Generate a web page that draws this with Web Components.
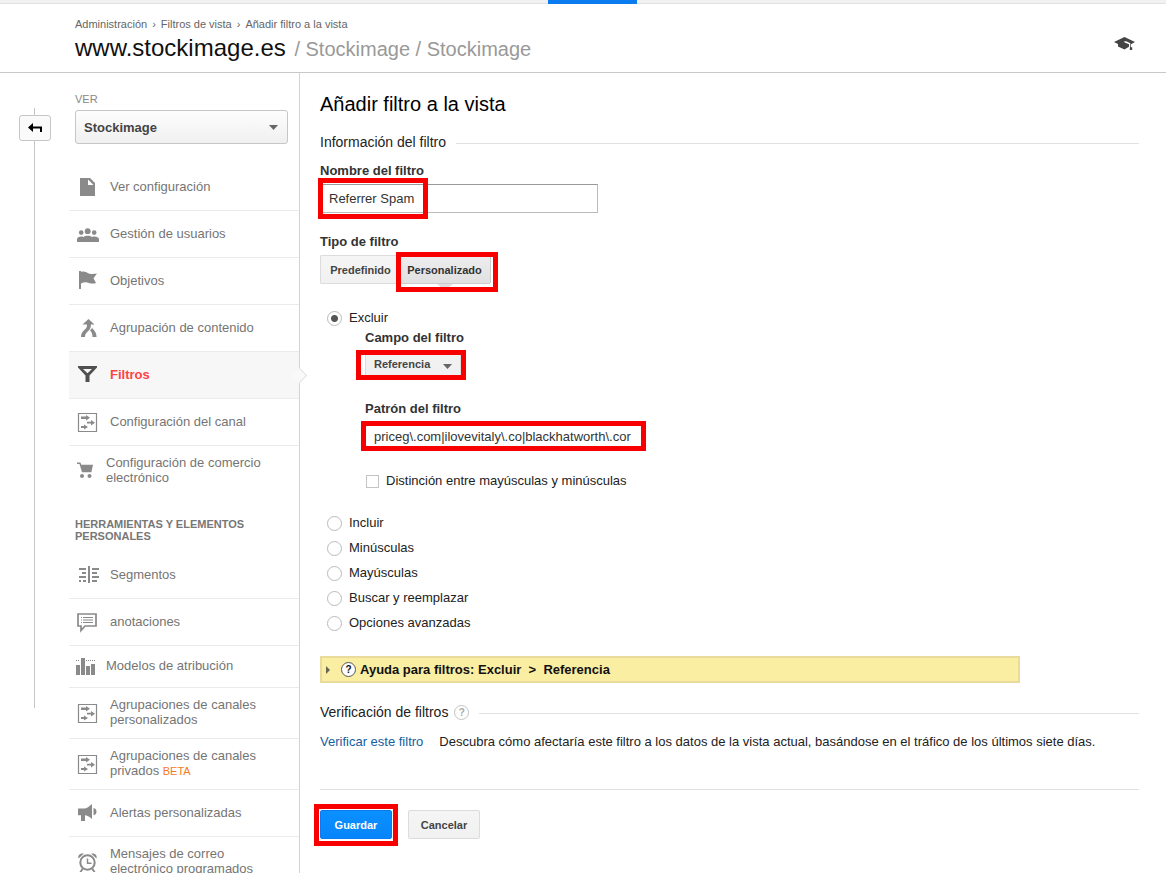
<!DOCTYPE html>
<html lang="es">
<head>
<meta charset="utf-8">
<title>Añadir filtro a la vista</title>
<style>
	body { margin: 0; height: 100vh; overflow: hidden; background: #fff; color: #222; font: 13px/16px "Liberation Sans", Arial, sans-serif; }
</style>
</head>
<body>
<admin-page>
	<admin-header slot="header"></admin-header>
	<back-rail slot="rail"></back-rail>
	<admin-sidebar slot="sidebar">
		<nav-item icon="doc">Ver configuración</nav-item>
		<nav-item icon="users">Gestión de usuarios</nav-item>
		<nav-item icon="flag">Objetivos</nav-item>
		<nav-item icon="merge">Agrupación de contenido</nav-item>
		<nav-item icon="funnel" active>Filtros</nav-item>
		<nav-item icon="channel">Configuración del canal</nav-item>
		<nav-item icon="cart" narrow last>Configuración de comercio electrónico</nav-item>
		<nav-heading>Herramientas y elementos personales</nav-heading>
		<nav-item icon="segments">Segmentos</nav-item>
		<nav-item icon="note">anotaciones</nav-item>
		<nav-item icon="bars" narrow short>Modelos de atribución</nav-item>
		<nav-item icon="channel">Agrupaciones de canales personalizados</nav-item>
		<nav-item icon="channel" badge="BETA">Agrupaciones de canales privados</nav-item>
		<nav-item icon="horn">Alertas personalizadas</nav-item>
		<nav-item icon="clock">Mensajes de correo electrónico programados</nav-item>
	</admin-sidebar>
	<filter-form></filter-form>
</admin-page>

<script>
const ICONS = {
	doc: `<path d="M5 2h10l5 5v13H5z"/><path d="M13 3.500v5.500h5.500z" fill="#fff"/>`,
	users: `<circle cx="12.700" cy="8.200" r="2.900"/><circle cx="6.200" cy="9.600" r="2.300"/><circle cx="19.200" cy="9.600" r="2.300"/><path d="M2 19v-2.500C2 14.500 4 13.600 6 13.600c.9 0 1.700.1 2.400.5 1.100-.9 2.600-1.300 4.300-1.300s3.200.4 4.300 1.300c.7-.4 1.500-.5 2.400-.5 2.300 0 4.600.9 4.600 2.900V19z"/>`,
	flag: `<path d="M4 1h2v18H4zM6 2c3-1 5 0 7 1.200 2.500 1.300 5 .6 9 .3l-3.500 4.800L21 13c-4 1.600-7-.4-9-.6-2.400-.3-4 .2-6 1z"/>`,
	merge: `<path d="M13.500 2l6 5.500h-3.600c0 2.500-.5 4.300-1.900 5.800l-2.300 2.300C10.500 17 10 18 10 20H6c0-3 1.100-5 2.900-6.600l1.700-1.700c1-1 1.400-2 1.400-4.200H7.500z"/><path d="M15 13.600l2-2.500c2.800 2.500 4.500 5 4.600 8.900h-4.100c0-3-.7-4.600-2.500-6.400z"/>`,
	funnel: `<path fill-rule="evenodd" d="M3 2h19v1.500l-7.500 8V18h-4v-6.500L3 3.500zM8 5l4.500 4.300L17 5z"/>`,
	channel: `<path d="M3.500 2.500h18v18h-18z" fill="none" stroke="currentColor" stroke-width="1.200"/><path d="M6 5.500h5V4l4 2.800-4 2.700V8H6zM12 10.700h4V9l4 2.700-4 2.700v-1.800h-4zM6 15h3v-1.500l4 2.500-4 2.500V17H6z"/>`,
	cart: `<path d="M2 2.500h3.400l.9 2.300H18l-1.600 7.400H7L4.500 4H2z"/><circle cx="7" cy="16" r="2"/><circle cx="14.500" cy="16" r="2"/>`,
	segments: `<path d="M13 2h2v17h-2zM4 4h7v2H4zM7 8h4v2H7zM4 12h7v2H4zM4 16h2v2H4zM8 16h3v2H8zM17 4h7v2h-7zM17 8h5v2h-5zM17 12h7v2h-7zM17 16h5v2h-5z"/>`,
	note: `<path d="M3 3h18v12H10l-4 4.500V15H3z" fill="none" stroke="currentColor" stroke-width="1.700"/><path d="M6 6h1v1H6zM8 6h10v1H8zM6 8.500h1v1H6zM8 8.500h10v1H8zM6 11h1v1H6zM8 11h10v1H8z"/>`,
	bars: `<path d="M1 9h4v10H1zM6 2h4v17H6zM11 10h4v9h-4zM16 8h4v11h-4z"/><path d="M1 4.500h4M11 4.500h9" stroke="currentColor" stroke-dasharray="1 1"/>`,
	horn: `<path d="M3 6.500h6c3 0 5-1.800 8-4.500v15c-3-2.500-5-3.500-7-3.700V19H6v-5.700H3zM18.500 6c4 .8 4 6.500 0 7.300z"/>`,
	clock: `<circle cx="12.500" cy="11.500" r="7.200" fill="none" stroke="currentColor" stroke-width="2"/><path d="M12.500 7.500v4.700h4" fill="none" stroke="currentColor" stroke-width="1.500"/><path d="M3.500 7.500C2.500 4 5.500 2 9 2.600zM21.500 7.500C22.500 4 19.500 2 16 2.600zM7 17l1.500 1.500L6.500 21H4.500zM18 17l-1.500 1.500 2 2.500h2z"/>`,
};

const RED_BOX = `
	.marked { position: relative; }
	.marked::after { content: ""; position: absolute; inset: var(--mark); border: 5px solid #f80000; pointer-events: none; }
`;

const CARET = `<svg class="caret" width="9" height="5" viewBox="0 0 9 5" aria-hidden="true"><path d="M0 0h9L4.500 5z" fill="#666"/></svg>`;

class BaseElement extends HTMLElement {
	constructor() {
		super();
		this.attachShadow({ mode: "open" });
	}

	connectedCallback() {
		this.shadowRoot.innerHTML = `<style>* { box-sizing: border-box; } ${this.styles()}</style>${this.markup()}`;
	}

	styles() {
		return ":host { display: block; }";
	}

	markup() {
		return "<slot></slot>";
	}
}

class AdminPage extends BaseElement {
	styles() {
		return `
			:host { display: flex; flex-direction: column; height: 100%; }
			.columns { flex: 1; min-height: 0; display: grid; grid-template-columns: 69px 231px minmax(0, 1fr); }
		`;
	}

	markup() {
		return `
			<slot name="header"></slot>
			<div class="columns">
				<slot name="rail"></slot>
				<slot name="sidebar"></slot>
				<slot></slot>
			</div>
		`;
	}
}

class AdminHeader extends BaseElement {
	styles() {
		return `
			:host { display: block; border-bottom: 1px solid #c8c8c8; }
			.strip { height: 4px; padding-left: 47%; background: #f1f1f1; border-bottom: 1px solid #e2e2e2; }
			.tab { width: 89px; height: 4px; background: #0a7cf0; }
			header { display: flex; align-items: center; justify-content: space-between; padding: 13px 31px 9px 75px; }
			header svg { margin-top: 8px; }
			nav { display: flex; gap: 5px; font-size: 11px; line-height: 14px; color: #666; }
			a { color: inherit; text-decoration: none; }
			h1 { margin: 3px 0 0; font-size: 24px; line-height: 28px; font-weight: normal; color: #111; }
			small { font-size: 20px; color: #999; margin-left: 2px; }
		`;
	}

	markup() {
		return `
			<div class="strip"><div class="tab"></div></div>
			<header>
				<div>
					<nav>
						<a href="#">Administración</a><span>›</span>
						<a href="#">Filtros de vista</a><span>›</span>
						<a href="#">Añadir filtro a la vista</a>
					</nav>
					<h1>www.stockimage.es <small>/ Stockimage / Stockimage</small></h1>
				</div>
				<svg width="21" height="14" viewBox="0 0 21 14" aria-label="Ayuda" fill="#444">
					<path d="M0 5L10.500 0 21 5l-4 2.200v3h1.200V13h-2.400v-2.500l.5-.4V6.200l-4-2-2.600.3 1 1 4.300 1.700v2.500l-4.500 2.800L4 9.500V7z"/>
				</svg>
			</header>
		`;
	}
}

class BackRail extends BaseElement {
	styles() {
		return `
			:host { display: flex; flex-direction: column; align-items: center; padding-top: 35px; }
			i { width: 1px; background: #c6c6c6; }
			.top { height: 7px; }
			.bottom { height: 567px; }
			button { width: 32px; height: 26px; padding: 0; display: grid; place-items: center; border: 1px solid #c6c6c6; border-radius: 3px; background: #fafafa; }
		`;
	}

	markup() {
		return `
			<i class="top"></i>
			<button type="button" aria-label="Volver">
				<svg width="14" height="11" viewBox="0 0 14 11"><path d="M0 4.500L5 0v3.500h9V9h-2V5.500H5V9z"/></svg>
			</button>
			<i class="bottom"></i>
		`;
	}
}

class AdminSidebar extends BaseElement {
	styles() {
		return `
			:host { display: block; border-right: 1px solid #d4d4d4; padding-top: 19px; }
			label { display: block; padding-left: 6px; font-size: 11px; line-height: 14px; color: #888; }
			.select { display: grid; align-items: center; margin: 4px 11px 20px 6px; }
			.select > * { grid-area: 1 / 1; }
			.caret { justify-self: end; margin-right: 10px; pointer-events: none; }
			select { appearance: none; width: 100%; height: 34px; padding: 0 8px; border: 1px solid #c6c6c6; border-radius: 3px; background: linear-gradient(#fdfdfd, #f0f0f0); color: #444; font: bold 13px "Liberation Sans", Arial, sans-serif; }
		`;
	}

	markup() {
		return `
			<label for="view">VER</label>
			<div class="select"><select id="view"><option>Stockimage</option></select>${CARET}</div>
			<nav><slot></slot></nav>
		`;
	}
}

class NavHeading extends BaseElement {
	styles() {
		return `
			:host { display: block; padding: 21px 40px 10px 6px; font-size: 11px; line-height: 12px; font-weight: bold; color: #777; text-transform: uppercase; }
		`;
	}
}

class NavItem extends BaseElement {
	styles() {
		return `
			:host { display: block; position: relative; border-bottom: 1px solid #ebebeb; }
			:host([last]) { border-bottom-color: transparent; }
			a { display: flex; align-items: center; gap: 10px; min-height: 46px; padding: 9px 30px 9px 6px; color: #757575; line-height: 15px; text-decoration: none; }
			:host([short]) a { min-height: 41px; }
			span { padding-bottom: 2px; }
			svg { flex: none; width: 25px; height: 22px; color: #8a8a8a; fill: currentColor; }
			:host([narrow]) svg { width: 21px; }
			small { font-size: 11px; line-height: 11px; color: #f47b20; }
			:host([active]) { background: #f7f7f7; }
			:host([active]) a { color: #f44; font-weight: bold; }
			:host([active]) svg { color: #505050; }
			:host([active])::after { content: ""; position: absolute; right: -6px; top: 18px; width: 11px; height: 11px; box-sizing: border-box; background: #f9f9f9; border: solid #e2e2e2; border-width: 1px 1px 0 0; transform: rotate(45deg); }
		`;
	}

	markup() {
		const badge = this.getAttribute("badge");
		const width = this.hasAttribute("narrow") ? 21 : 25;
		return `
			<a href="#">
				<svg viewBox="0 0 ${width} 22" aria-hidden="true">${ICONS[this.getAttribute("icon")]}</svg>
				<span><slot></slot>${badge ? ` <small>${badge}</small>` : ""}</span>
			</a>
		`;
	}
}

class SectionHeading extends BaseElement {
	styles() {
		return `
			:host { display: flex; align-items: center; gap: 10px; color: #222; }
			h3 { margin: 0; display: flex; align-items: center; gap: 6px; font-size: 14px; line-height: 18px; font-weight: normal; }
			hr { flex: 1; margin: 3px 0 0; border: 0; border-top: 1px solid #e2e2e2; }
		`;
	}

	markup() {
		return `<h3><slot></slot></h3><hr>`;
	}
}

class HelpDot extends BaseElement {
	styles() {
		return `
			:host { display: inline-grid; place-items: center; box-sizing: border-box; width: 15px; height: 15px; border: 1px solid #c4c4c4; border-radius: 50%; background: #fff; color: #aaa; font-size: 10px; line-height: 13px; font-weight: bold; }
			:host([strong]) { border-color: #555; color: #111; }
		`;
	}
}

class TextField extends BaseElement {
	styles() {
		return `
			:host { display: block; }
			label { display: block; margin-bottom: 5px; font-weight: bold; color: #333; }
			.control { width: 278px; }
			input { display: block; width: 100%; height: 29px; padding: 0 8px; border: 1px solid #bbb; border-top-color: #999; background: #fff; color: #333; font: 13px "Liberation Sans", Arial, sans-serif; }
			${RED_BOX}
		`;
	}

	markup() {
		return `
			<label for="field">${this.getAttribute("label")}</label>
			<div class="control marked"><input id="field" type="text" value="${this.getAttribute("value")}"></div>
		`;
	}
}

class SelectField extends BaseElement {
	styles() {
		return `
			:host { display: block; }
			label { display: block; margin-bottom: 5px; font-weight: bold; color: #333; }
			.select { display: grid; align-items: center; width: 96px; }
			.select > * { grid-area: 1 / 1; }
			.caret { justify-self: end; margin: 2px 9px 0 0; pointer-events: none; }
			select { appearance: none; width: 100%; height: 28px; padding: 0 8px 2px; border: 1px solid #dcdcdc; border-radius: 2px; background: #f1f1f1; color: #444; font: bold 11px "Liberation Sans", Arial, sans-serif; }
			${RED_BOX}
		`;
	}

	markup() {
		return `
			<label for="field">${this.getAttribute("label")}</label>
			<div class="select marked"><select id="field"><option>${this.getAttribute("value")}</option></select>${CARET}</div>
		`;
	}
}

class FilterOptions extends BaseElement {
	styles() {
		return `
			:host { display: block; color: #222; }
			fieldset { margin: 0; padding: 0 0 0 7px; border: 0; display: grid; gap: 5px; }
			label { display: flex; align-items: center; gap: 7px; line-height: 20px; }
			input { appearance: none; margin: 1px 0 0; width: 15px; height: 15px; border: 1px solid #bbb; border-radius: 50%; background: #fff; }
			input:checked { background: radial-gradient(circle, #555 0 3px, #fff 4px); }
			.detail { padding: 2px 0 17px 38px; margin-top: -5px; }
		`;
	}

	markup() {
		const [first, ...rest] = this.getAttribute("options").split(",");
		const radio = (text, checked) =>
			`<label><input type="radio" name="action"${checked ? " checked" : ""}>${text}</label>`;
		return `
			<fieldset aria-label="Tipo de filtro">
				${radio(first, true)}
				<div class="detail"><slot></slot></div>
				${rest.map((text) => radio(text, false)).join("")}
			</fieldset>
		`;
	}
}

class FilterForm extends BaseElement {
	styles() {
		return `
			:host { display: block; padding: 19px 27px 27px 20px; }
			h2 { margin: 0 0 17px; font-size: 20px; line-height: 24px; font-weight: normal; color: #000; }
			button { font: bold 11px "Liberation Sans", Arial, sans-serif; color: #444; border: 1px solid #dcdcdc; border-radius: 2px; background: linear-gradient(#f5f5f5, #f1f1f1); height: 29px; padding: 0 8px; }
			.name { margin: 12px 0 21px; --mark: -6px 170px -6px -2px; }
			.type { font-weight: bold; color: #333; margin-bottom: 5px; }
			.tabs { display: flex; margin-bottom: 24px; }
			.tabs button { width: 80px; border-right: 0; white-space: nowrap; }
			.tabs .on { --mark: -3px -7px -8px -4px; }
			.tabs .on button { width: 91px; padding: 0 8px 0 6px; border: 1px solid #ccc; background: linear-gradient(#eee, #e0e0e0); color: #333; }
			.notch { position: absolute; left: 37px; top: 29px; }
			.field { --mark: -1px -5px -1px -9px; margin-bottom: 22px; }
			.pattern { --mark: -1px -3px 0 -4px; margin-bottom: 20px; }
			.case { display: flex; align-items: center; gap: 7px; line-height: 20px; }
			.case input { appearance: none; width: 13px; height: 13px; margin: 0 0 0 1px; border: 1px solid #c4c4c4; background: #fff; }
			.help { display: flex; align-items: center; width: 100%; max-width: 700px; height: 27px; margin: 23px 0 20px; padding: 0 4px; border: 2px solid #eadb9d; border-radius: 0; background: #faeea2; color: #111; font-size: 13px; gap: 4px; }
			.help svg { margin-right: 7px; }
			.help span { white-space: pre; }
			.verify { display: flex; gap: 16px; margin-top: 11px; line-height: 20px; }
			.verify a { flex: none; color: #15609f; text-decoration: none; }
			footer { display: flex; gap: 16px; margin-top: 37px; padding-top: 20px; border-top: 1px solid #e0e0e0; }
			footer button { display: block; width: 72px; }
			footer .marked { --mark: -6px -6px -7px -6px; }
			footer .primary { border-color: #0a7cf0; background: linear-gradient(#0a90ff, #0785fa); color: #fff; }
			${RED_BOX}
		`;
	}

	markup() {
		return `
			<h2>Añadir filtro a la vista</h2>
			<section-heading>Información del filtro</section-heading>
			<text-field class="name" label="Nombre del filtro" value="Referrer Spam"></text-field>
			<div class="type">Tipo de filtro</div>
			<div class="tabs">
				<button type="button">Predefinido</button>
				<div class="on marked">
					<button type="button" aria-pressed="true">Personalizado</button>
					<svg class="notch" width="16" height="4" viewBox="0 0 16 4"><path d="M0 0h16l-5 4H5z" fill="#e0e0e0"/></svg>
				</div>
			</div>
			<filter-options options="Excluir,Incluir,Minúsculas,Mayúsculas,Buscar y reemplazar,Opciones avanzadas">
				<select-field class="field" label="Campo del filtro" value="Referencia"></select-field>
				<text-field class="pattern" label="Patrón del filtro" value="priceg\\.com|ilovevitaly\\.co|blackhatworth\\.cor"></text-field>
				<label class="case"><input type="checkbox">Distinción entre mayúsculas y minúsculas</label>
			</filter-options>
			<button type="button" class="help" aria-expanded="false">
				<svg width="4" height="8" viewBox="0 0 4 8"><path d="M0 0l4 4-4 4z" fill="#665"/></svg>
				<help-dot strong>?</help-dot>
				<span>Ayuda para filtros: Excluir  &gt;  Referencia</span>
			</button>
			<section-heading>Verificación de filtros <help-dot>?</help-dot></section-heading>
			<div class="verify">
				<a href="#">Verificar este filtro</a>
				<span>Descubra cómo afectaría este filtro a los datos de la vista actual, basándose en el tráfico de los últimos siete días.</span>
			</div>
			<footer>
				<div class="marked"><button type="submit" class="primary">Guardar</button></div>
				<button type="button">Cancelar</button>
			</footer>
		`;
	}
}

customElements.define("admin-page", AdminPage);
customElements.define("admin-header", AdminHeader);
customElements.define("back-rail", BackRail);
customElements.define("admin-sidebar", AdminSidebar);
customElements.define("nav-heading", NavHeading);
customElements.define("nav-item", NavItem);
customElements.define("section-heading", SectionHeading);
customElements.define("help-dot", HelpDot);
customElements.define("text-field", TextField);
customElements.define("select-field", SelectField);
customElements.define("filter-options", FilterOptions);
customElements.define("filter-form", FilterForm);
</script>
</body>
</html>
